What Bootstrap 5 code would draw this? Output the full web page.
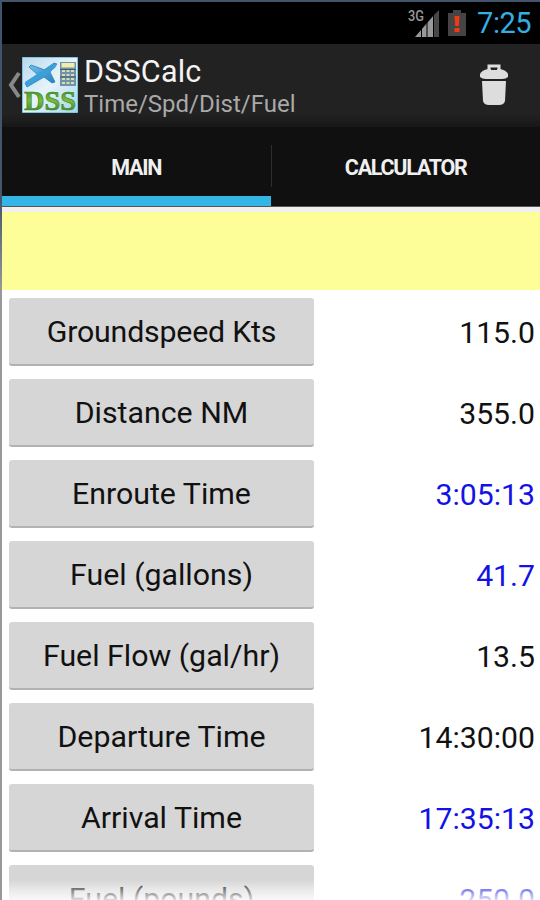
<!DOCTYPE html>
<html lang="en">
<head>
<meta charset="utf-8">
<meta name="viewport" content="width=device-width, initial-scale=1">
<title>DSSCalc</title>
<link href="https://cdn.jsdelivr.net/npm/bootstrap@5.3.0/dist/css/bootstrap.min.css" rel="stylesheet">
<style>
body{font-family:Roboto,"Liberation Sans",sans-serif;height:900px;line-height:1}
.screen{width:540px;height:900px;border-left:2px solid #93959a;border-image:linear-gradient(#40536b 0,#46566b 200px,#96989c 290px,#96989c) 1}
.status{height:44px;background:#000;border-top:2px solid #43546b;padding:1px 9px 0 0}
.clock{font-size:29px;color:#35aee2;letter-spacing:-.5px;width:57px}
.actions{height:83px;background:linear-gradient(#222 0,#222 70px,#171717);padding:0 30px 2px 5px}
.title-block{padding:4px 0 0 6px}
.app-title{font-size:30.5px;color:#f3f3f3;line-height:34px;letter-spacing:.2px}
.app-sub{font-size:24px;color:#a9a9a9;line-height:30px}
.logo{overflow:visible}
.tabs{height:80px;background:#101010;border-bottom:1px solid #555}
.tabs .nav-link{padding:12px 0 0;border-radius:0;color:#f0f0f0!important;font-size:21.500px;font-weight:700;letter-spacing:-1.25px;border-bottom:10px solid transparent}
.tabs .nav-link.active{background:none;border-bottom-color:#33b5e5}
.tab-rule{width:1px;height:42px;margin-top:18px;background:#2e2e2e}
.message{height:83px;background:#fefe99;border-top:5px solid #f1f0f1}
.rows{padding:8px 5px 0 7px;background:#fff}
.entry{height:68px;margin-bottom:13px;font-size:30.2px}
.entry .btn{width:305px;height:68px;padding:3px 0 0;border:0;border-bottom:2px solid #b2b2b2;border-radius:3px;background:#d6d6d6;color:#111;font-size:30.3px;line-height:1}
.entry:first-child .btn{letter-spacing:-.2px}
.value{color:#111;padding-top:2px}
.calc{color:#1212e6}
.fade-edge{height:20px;background:linear-gradient(rgba(255,255,255,0),rgba(255,255,255,.4) 40%,rgba(255,255,255,.85))}
</style>
</head>
<body class="overflow-hidden">
<main class="screen position-relative overflow-hidden d-flex flex-column">
  <div class="status d-flex align-items-center justify-content-end flex-shrink-0">
    <svg width="32" height="30" viewBox="0 0 32 30" class="me-2"><text x="0" y="12" font-family="Roboto" font-size="14" font-weight="500" fill="#999" textLength="16" lengthAdjust="spacingAndGlyphs">3G</text><path d="M7 28 26 6V28Z" fill="#999"/><path d="M26 6 31 1V28H26Z" fill="#484848"/><path d="M13.5 18V28M19 12V28M25.500 5V28" stroke="#000" stroke-width="1"/></svg>
    <svg width="18" height="27" viewBox="0 0 18 27" class="me-2"><path d="M0 3H5V0H13V3H18V26H0Z" fill="#444"/><path d="M6.500 6H11.500L10.800 16H7.200ZM6.500 18H11.500V22H6.500Z" fill="#f03a16"/></svg>
    <span class="clock text-end">7:25</span>
  </div>
  <header class="actions d-flex align-items-center flex-shrink-0">
    <svg width="15" height="30" viewBox="0 0 15 30"><path d="M12 3 4 15 12 27" fill="none" stroke="#888" stroke-width="4"/></svg>
    <svg width="56" height="56" viewBox="0 0 56 56" class="logo flex-shrink-0">
      <defs><linearGradient id="sky" x2="1" y2="1"><stop stop-color="#b9d9eb"/><stop offset=".5" stop-color="#e6f4fb"/><stop offset="1" stop-color="#a7d5e9"/></linearGradient><linearGradient id="wing" x2="1" y2="1"><stop stop-color="#79c8ef"/><stop offset="1" stop-color="#1b78bd"/></linearGradient><linearGradient id="grass" x2="0" y2="1"><stop stop-color="#2d7a28"/><stop offset=".5" stop-color="#79bd37"/><stop offset="1" stop-color="#287227"/></linearGradient></defs>
      <path d="M.5.5H55.500V55.500H.5Z" fill="url(#sky)" stroke="#7fc4e4"/>
      <path d="M3 26 16 18 7 10 9 8 23 13 32 6 35 7 28 15 33 25 30 26 22 20 5 30Z" fill="url(#wing)" stroke="#297fb5" stroke-width=".8"/>
      <path d="M3 25 30 7 35 7 33 11 5 30Z" fill="#3c9fda"/>
      <path d="M38 5H54V29H38Z" fill="#7093aa"/><path d="M39.500 6H52.500V10.500H39.500Z" fill="#f4edaa"/>
      <path d="M40 14H52M40 18H52M40 22H52M40 26H52" stroke="#d9ddb0" stroke-width="2" stroke-dasharray="3 1.5"/>
      <path d="M38 12.500H54M38 20H54" stroke="#355e74"/>
      <text x="2" y="53" font-family="Liberation Serif" font-weight="700" font-size="28" textLength="52" lengthAdjust="spacingAndGlyphs" fill="url(#grass)" stroke="#3d8b2b" stroke-width=".7">DSS</text>
    </svg>
    <div class="flex-grow-1 title-block">
      <div class="app-title">DSSCalc</div>
      <div class="app-sub">Time/Spd/Dist/Fuel</div>
    </div>
    <svg width="32" height="42" viewBox="0 0 32 42"><path d="M11 7V2H21V7" fill="none" stroke="#ddd" stroke-width="3"/><path d="M2 13V10Q4 6 10 5H22Q28 6 30 10V13Q28 15 24 15H8Q4 15 2 13Z" fill="#ddd"/><path d="M13 4H19V6H13Z" fill="#222"/><path d="M4 17H28L27 37Q26 41 21 41H11Q6 41 5 37Z" fill="#ddd"/></svg>
  </header>
  <nav class="tabs nav nav-pills d-flex flex-nowrap flex-shrink-0">
    <a class="nav-link active w-50 d-flex align-items-center justify-content-center" href="#">MAIN</a>
    <span class="tab-rule"></span>
    <a class="nav-link w-50 d-flex align-items-center justify-content-center" href="#">CALCULATOR</a>
  </nav>
  <div class="message flex-shrink-0"></div>
  <section class="rows">
    <div class="entry d-flex align-items-center justify-content-between"><button class="btn">Groundspeed Kts</button><span class="value">115.0</span></div>
    <div class="entry d-flex align-items-center justify-content-between"><button class="btn">Distance NM</button><span class="value">355.0</span></div>
    <div class="entry d-flex align-items-center justify-content-between"><button class="btn">Enroute Time</button><span class="value calc">3:05:13</span></div>
    <div class="entry d-flex align-items-center justify-content-between"><button class="btn">Fuel (gallons)</button><span class="value calc">41.7</span></div>
    <div class="entry d-flex align-items-center justify-content-between"><button class="btn">Fuel Flow (gal/hr)</button><span class="value">13.5</span></div>
    <div class="entry d-flex align-items-center justify-content-between"><button class="btn">Departure Time</button><span class="value">14:30:00</span></div>
    <div class="entry d-flex align-items-center justify-content-between"><button class="btn">Arrival Time</button><span class="value calc">17:35:13</span></div>
    <div class="entry d-flex align-items-center justify-content-between"><button class="btn">Fuel (pounds)</button><span class="value calc">250.0</span></div>
  </section>
  <div class="fade-edge position-absolute bottom-0 start-0 w-100"></div>
</main>
<script src="https://cdn.jsdelivr.net/npm/bootstrap@5.3.0/dist/js/bootstrap.bundle.min.js"></script>
</body>
</html>
